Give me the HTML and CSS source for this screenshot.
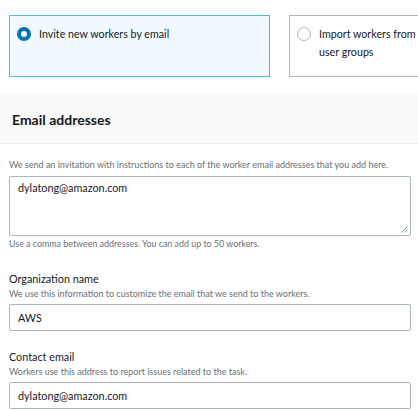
FILE: index.html
```html
<!DOCTYPE html>
<html>
<head>
<meta charset="utf-8">
<link rel="stylesheet" href="styles.css">
</head>
<body>
<div class="page">
  <div class="choices">
    <div class="card selected">
      <span class="radio on"></span>
      <span class="card-text">Invite new workers by email</span>
    </div>
    <div class="card">
      <span class="radio"></span>
      <span class="card-text">Import workers from existing Amazon Cognito<br>user groups</span>
    </div>
  </div>
  <div class="section-head">
    <h2>Email addresses</h2>
  </div>
  <div class="section-body">
    <div class="field first">
      <div class="desc">We send an invitation with instructions to each of the worker email addresses that you add here.</div>
      <div class="textarea">dylatong@amazon.com
        <svg class="grip" width="7" height="7" viewBox="0 0 7 7"><path d="M0.5 6.5 L6.5 0.5 M3.5 6.5 L6.5 3.5" stroke="#879596" stroke-width="1" fill="none"/></svg>
      </div>
      <div class="hint">Use a comma between addresses. You can add up to 50 workers.</div>
    </div>
    <div class="field">
      <div class="label">Organization name</div>
      <div class="desc">We use this information to customize the email that we send to the workers.</div>
      <div class="input">AWS</div>
    </div>
    <div class="field">
      <div class="label">Contact email</div>
      <div class="desc">Workers use this address to report issues related to the task.</div>
      <div class="input">dylatong@amazon.com</div>
    </div>
  </div>
</div>
</body>
</html>
```
FILE: styles.css
```css
html, body {
  margin: 0;
  padding: 0;
  background: #ffffff;
  overflow: hidden;
}
body {
  font-family: "Lato", "Open Sans", sans-serif;
  color: #16191f;
  width: 418px;
  height: 410px;
}
.page {
  width: 418px;
}
.choices {
  display: flex;
  gap: 19px;
  padding: 15px 0 0 9px;
  height: 95px;
  box-sizing: border-box;
  overflow: hidden;
  width: 418px;
}
.card {
  flex: 0 0 261px;
  height: 62px;
  box-sizing: border-box;
  border: 1px solid #aab7b8;
  background: #fff;
  display: flex;
  align-items: flex-start;
  padding: 9px 8px 0 7px;
  gap: 8px;
}
.card.selected {
  border-color: #4cbbdc;
  background: #f1faff;
}
.radio {
  flex: 0 0 14px;
  width: 14px;
  height: 14px;
  box-sizing: border-box;
  border-radius: 50%;
  border: 1px solid #aab7b8;
  background: #fff;
  margin-top: 2px;
}
.radio.on {
  border: 4px solid #0073bb;
}
.card-text {
  font-size: 10.7px;
  line-height: 18px;
  color: #16191f;
  white-space: nowrap;
}
.section-head {
  background: #fafafa;
  border-bottom: 1px solid #eaeded;
  height: 49px;
  box-sizing: border-box;
  display: flex;
  align-items: center;
  padding-left: 12px;
}
.section-head h2 {
  margin: 0;
  font-size: 14px;
  font-weight: 700;
  color: #16191f;
}
.section-body {
  padding: 14px 7px 0 9px;
}
.field {
  margin-bottom: 18px;
}
.field.first {
  margin-bottom: 20px;
}
.label {
  font-size: 10.8px;
  line-height: 16px;
  color: #16191f;
}
.desc {
  font-size: 9px;
  line-height: 14px;
  color: #687078;
  margin-bottom: 4px;
  white-space: nowrap;
}
.label + .desc {
  margin-bottom: 3px;
}
.textarea, .input {
  box-sizing: border-box;
  border: 1px solid #aab7b8;
  border-radius: 2px;
  font-size: 10.8px;
  color: #16191f;
  padding: 0 8px;
  background: #fff;
}
.textarea {
  position: relative;
  height: 60px;
  padding-top: 3px;
  line-height: 16px;
}
.grip {
  position: absolute;
  right: 2px;
  bottom: 2px;
}
.input {
  height: 27px;
  line-height: 25px;
}
.hint {
  font-size: 8.9px;
  line-height: 14px;
  color: #687078;
  margin-top: 1px;
}
```
